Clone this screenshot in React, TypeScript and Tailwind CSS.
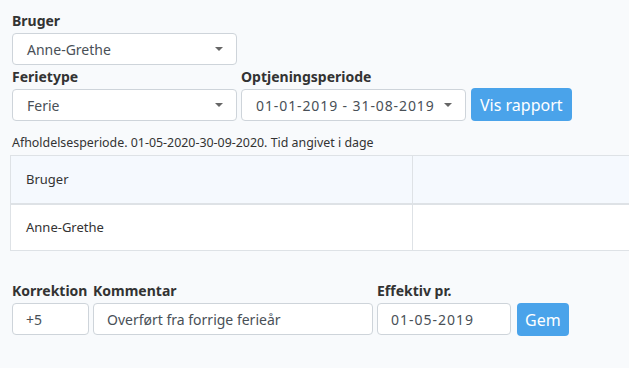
const Caret = () => (
  <span className="ml-auto inline-block h-0 w-0 border-x-[4px] border-t-[4px] border-x-transparent border-t-[#666]" />
)

const SelectBox = ({ value, className }: { value: string; className: string }) => (
  <div
    className={`flex h-[32px] items-center rounded border border-[#ced4da] bg-white pl-[14px] pr-[13px] text-[14px] text-[#495057] ${className}`}
  >
    <span>{value}</span>
    <Caret />
  </div>
)

const InputBox = ({ value, className }: { value: string; className: string }) => (
  <div
    className={`flex h-[32px] items-center rounded border border-[#ced4da] bg-white px-[13px] text-[14px] text-[#495057] ${className}`}
  >
    {value}
  </div>
)

const App = () => {
  return (
    <div className="h-[368px] w-[629px] overflow-hidden bg-[#f8fafc] font-['Noto_Sans',sans-serif] text-[#212529]">
      <div className="pl-[12px] pt-[12px]">
        <label className="block text-[14px] font-bold leading-[17px] text-[#333]">Bruger</label>
        <SelectBox value="Anne-Grethe" className="mt-[4px] w-[225px]" />

        <div className="mt-[3px] flex items-end gap-[4px]">
          <div>
            <label className="block text-[14px] font-bold leading-[17px] text-[#333]">Ferietype</label>
            <SelectBox value="Ferie" className="mt-[4px] w-[225px]" />
          </div>
          <div>
            <label className="block text-[14px] font-bold leading-[17px] text-[#333]">Optjeningsperiode</label>
            <SelectBox value="01-01-2019 - 31-08-2019" className="mt-[4px] w-[225px] tracking-[0.9px]" />
          </div>
          <button className="ml-[1px] h-[33px] rounded bg-[#4aa3ea] px-[9px] text-[16px] text-white">
            Vis rapport
          </button>
        </div>

        <p className="mt-[14px] text-[12.4px] leading-[16px] text-[#333]">
          Afholdelsesperiode. 01-05-2020-30-09-2020. Tid angivet i dage
        </p>
      </div>

      <table className="ml-[10px] mt-[4px] w-[640px] border-collapse text-[13px] text-[#333]">
        <thead>
          <tr className="h-[48px] bg-[#f5f9fe]">
            <th className="w-[402px] border border-b-2 border-[#dee2e6] pl-[15px] text-left font-normal">Bruger</th>
            <th className="border border-b-2 border-[#dee2e6]"></th>
          </tr>
        </thead>
        <tbody>
          <tr className="h-[47px] bg-white">
            <td className="border border-[#dee2e6] pl-[15px]">Anne-Grethe</td>
            <td className="border border-[#dee2e6]"></td>
          </tr>
        </tbody>
      </table>

      <div className="mt-[31px] flex items-end gap-[4px] pl-[12px]">
        <div>
          <label className="block text-[14px] font-bold leading-[17px] text-[#333]">Korrektion</label>
          <InputBox value="+5" className="mt-[4px] w-[77px]" />
        </div>
        <div>
          <label className="block text-[14px] font-bold leading-[17px] text-[#333]">Kommentar</label>
          <InputBox value="Overført fra forrige ferieår" className="mt-[4px] w-[280px]" />
        </div>
        <div>
          <label className="block text-[14px] font-bold leading-[17px] text-[#333]">Effektiv pr.</label>
          <InputBox value="01-05-2019" className="mt-[4px] w-[134px] tracking-[1px]" />
        </div>
        <button className="mb-[-1px] ml-[2px] h-[33px] rounded bg-[#4aa3ea] px-[8px] text-[16px] text-white">Gem</button>
      </div>
    </div>
  )
}

export default App
